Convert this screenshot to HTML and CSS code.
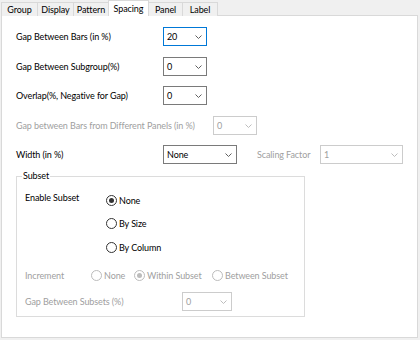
FILE: index.html
```html
<!DOCTYPE html>
<html lang="en">
<head>
  <meta charset="UTF-8">
  <title>Spacing</title>
  <link rel="stylesheet" href="styles.css">
</head>
<body>
  <div class="tabs">
    <div class="tab t-group">Group</div>
    <div class="tab t-display">Display</div>
    <div class="tab t-pattern">Pattern</div>
    <div class="tab t-spacing active">Spacing</div>
    <div class="tab t-panel">Panel</div>
    <div class="tab t-label">Label</div>
  </div>

  <div class="panel">
    <div class="row">
      <span class="lbl">Gap Between Bars (in %)</span>
      <div class="combo focus w44">20<svg class="chev" width="7" height="4" viewBox="0 0 7 4"><path d="M0.5 0.5L3.5 3.5L6.5 0.5"/></svg></div>
    </div>
    <div class="row">
      <span class="lbl">Gap Between Subgroup(%)</span>
      <div class="combo w44">0<svg class="chev" width="7" height="4" viewBox="0 0 7 4"><path d="M0.5 0.5L3.5 3.5L6.5 0.5"/></svg></div>
    </div>
    <div class="row">
      <span class="lbl">Overlap(%, Negative for Gap)</span>
      <div class="combo w44">0<svg class="chev" width="7" height="4" viewBox="0 0 7 4"><path d="M0.5 0.5L3.5 3.5L6.5 0.5"/></svg></div>
    </div>
    <div class="row disabled">
      <span class="lbl wide">Gap between Bars from Different Panels (in %)</span>
      <div class="combo w44">0<svg class="chev" width="7" height="4" viewBox="0 0 7 4"><path d="M0.5 0.5L3.5 3.5L6.5 0.5"/></svg></div>
    </div>
    <div class="row last">
      <span class="lbl">Width (in %)</span>
      <div class="combo w74">None<svg class="chev" width="7" height="4" viewBox="0 0 7 4"><path d="M0.5 0.5L3.5 3.5L6.5 0.5"/></svg></div>
      <div class="disabled scale">
        <span class="lbl-scale">Scaling Factor</span>
        <div class="combo w83">1<svg class="chev" width="7" height="4" viewBox="0 0 7 4"><path d="M0.5 0.5L3.5 3.5L6.5 0.5"/></svg></div>
      </div>
    </div>

    <fieldset class="subset">
      <legend>Subset</legend>
      <div class="enable">
        <span class="lbl-enable">Enable Subset</span>
        <div class="radio-list">
          <label class="radio"><span class="dot checked"></span>None</label>
          <label class="radio"><span class="dot"></span>By Size</label>
          <label class="radio"><span class="dot"></span>By Column</label>
        </div>
      </div>
      <div class="inc disabled">
        <span class="lbl-inc">Increment</span>
        <label class="radio r-none"><span class="dot"></span>None</label>
        <label class="radio r-within"><span class="dot checked"></span>Within Subset</label>
        <label class="radio"><span class="dot"></span>Between Subset</label>
      </div>
      <div class="gap-row disabled">
        <span class="lbl-gap">Gap Between Subsets (%)</span>
        <div class="combo w50">0<svg class="chev" width="7" height="4" viewBox="0 0 7 4"><path d="M0.5 0.5L3.5 3.5L6.5 0.5"/></svg></div>
      </div>
    </fieldset>
  </div>
</body>
</html>
```

FILE: styles.css
```css
/* Global */
body {
  margin: 0;
  background: #f0f0f0;
  font-family: Lato, "Liberation Sans", sans-serif;
  font-size: 9px;
  letter-spacing: -0.1px;
  color: #000;
}

/* Tabs */
.tabs {
  display: flex;
  height: 15px;
  padding-left: 1px;
  position: relative;
  z-index: 1;
}
.tab {
  height: 14px;
  margin-top: 2px;
  border: 1px solid #d9d9d9;
  border-bottom: none;
  margin-left: -1px;
  background: #f0f0f0;
  line-height: 13px;
  text-align: center;
  box-sizing: border-box;
}
.t-group { width: 37px; margin-left: 0; }
.t-display { width: 37px; }
.t-pattern { width: 36px; }
.t-spacing { width: 41px; }
.t-panel { width: 35px; }
.t-label { width: 36px; }
.tab.active {
  margin-top: 0;
  height: 16px;
  background: #fff;
  line-height: 15px;
  position: relative;
  z-index: 2;
}

/* Panel */
.panel {
  margin-left: 1px;
  width: 417px;
  height: 323px;
  box-sizing: border-box;
  background: #fff;
  border: 1px solid #d9d9d9;
  padding: 11px 0 0 14px;
}

.row {
  display: flex;
  align-items: center;
  height: 19px;
  margin-bottom: 10.5px;
}
.row.last { margin-bottom: 0; }
.lbl { width: 147px; white-space: nowrap; }
.lbl.wide { width: 197px; }

.combo {
  position: relative;
  height: 19px;
  box-sizing: border-box;
  border: 1px solid #7a7a7a;
  background: #fff;
  padding-left: 3px;
  line-height: 17px;
}
.combo.focus { border-color: #0078d7; }
.chev {
  position: absolute;
  right: 4px;
  top: 7px;
}
.chev path { fill: none; stroke: #606060; stroke-width: 1; }
.w44 { width: 44px; }
.w50 { width: 50px; }
.w74 { width: 74px; }
.w83 { width: 83px; }

.disabled { color: #a0a0a0; }
.disabled .combo { border-color: #cccccc; }
.disabled .chev path { stroke: #bdbdbd; }

.scale {
  display: flex;
  align-items: center;
  margin-left: 20px;
}
.lbl-scale { width: 63px; white-space: nowrap; }

/* Subset group */
.subset {
  margin: 4px 0 0;
  width: 289px;
  height: 149px;
  box-sizing: border-box;
  border: 1px solid #dcdcdc;
  padding: 0 0 0 8px;
}
.subset legend {
  margin-left: -3px;
  padding: 0 1px;
  line-height: 16px;
}

.enable {
  display: flex;
  margin-top: 6px;
}
.lbl-enable { width: 81px; line-height: 16px; }
.radio-list {
  display: flex;
  flex-direction: column;
  gap: 7.5px;
  margin-top: 2px;
}
.radio {
  display: flex;
  align-items: center;
  height: 16px;
  white-space: nowrap;
}
.dot {
  width: 11px;
  height: 11px;
  box-sizing: border-box;
  border: 1px solid #333;
  border-radius: 50%;
  margin-right: 2px;
  background: #fff;
  position: relative;
}
.dot.checked::after {
  content: "";
  position: absolute;
  left: 2px;
  top: 2px;
  width: 5px;
  height: 5px;
  border-radius: 50%;
  background: #333;
}
.disabled .dot { border-color: #bcbcbc; }
.disabled .dot.checked::after { background: #bcbcbc; }

.inc {
  display: flex;
  align-items: center;
  height: 16px;
  margin-top: 12px;
}
.lbl-inc { width: 66px; }
.r-none { width: 43px; }
.r-within { width: 78px; }

.gap-row {
  display: flex;
  align-items: center;
  height: 19px;
  margin-top: 9px;
}
.lbl-gap { width: 157px; white-space: nowrap; }
```
